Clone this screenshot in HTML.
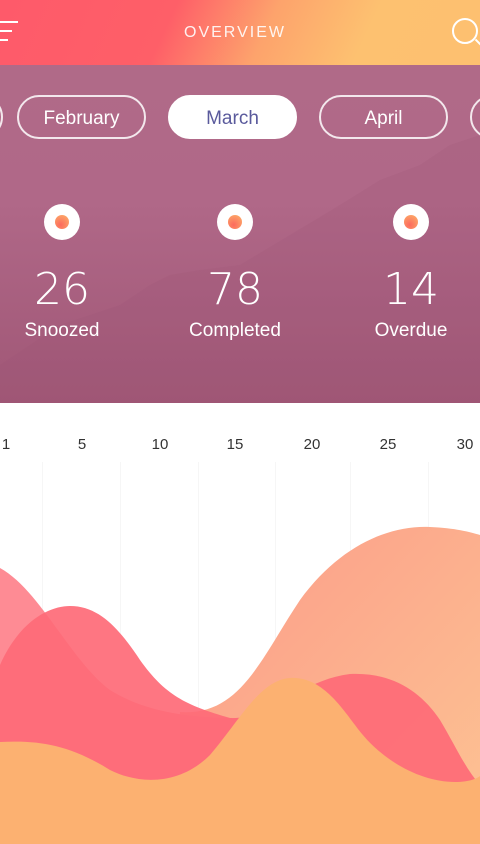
<!DOCTYPE html>
<html><head><meta charset="utf-8"><style>
*{margin:0;padding:0;box-sizing:border-box}
body{width:480px;height:844px;overflow:hidden;background:#fff;font-family:"Liberation Sans",sans-serif;position:relative}
.hdr{position:absolute;left:0;top:0;width:480px;height:65px;background:linear-gradient(115deg,#fe5a6a 0%,#fe5f68 35%,#fda36c 55%,#fdc170 75%,#fdc070 100%)}
.title{position:absolute;top:24px;left:0;width:470px;text-align:center;color:#fff;font-size:16px;letter-spacing:2px;opacity:.9}
.panel{position:absolute;left:0;top:65px;width:480px;height:338px;background:linear-gradient(180deg,#b06a88 0%,#b06888 40%,#a05776 100%);overflow:hidden}
.pill{position:absolute;top:30px;height:44px;width:129px;border:2px solid rgba(255,255,255,.85);border-radius:22px;color:#fff;font-size:19px;text-align:center;line-height:44px}
.pill.on{background:#fff;color:#5a5a9c;border-color:#fff}
.dot{position:absolute;width:36px;height:36px;border-radius:50%;background:#fff;top:139px}
.dot::after{content:"";position:absolute;left:11px;top:11px;width:14px;height:14px;border-radius:50%;background:radial-gradient(circle at 40% 70%,#fc6a5e,#fdb36a)}
.num{position:absolute;top:199px;font-family:"DejaVu Sans","Liberation Sans",sans-serif;font-size:44px;font-weight:200;width:160px;text-align:center;color:#fff}
.lbl{position:absolute;top:255px;font-size:19px;width:160px;text-align:center;color:#fff}
.ax{position:absolute;top:436px;font-size:15px;color:#333;width:30px;text-align:center}
.grid{position:absolute;top:462px;width:1px;height:250px;background:#f6f6f6}
</style></head><body>
<div class="hdr">
<div style="position:absolute;left:0;top:21px;width:18px;height:2px;background:#fff"></div>
<div style="position:absolute;left:0;top:30px;width:12px;height:2px;background:#fff"></div>
<div style="position:absolute;left:0;top:39px;width:8px;height:2px;background:#fff"></div>
<div class="title">OVERVIEW</div>
<div style="position:absolute;left:452px;top:18px;width:26px;height:26px;border:2px solid #fff;border-radius:50%"></div>
<div style="position:absolute;left:474px;top:42px;width:10px;height:2px;background:#fff;transform:rotate(45deg)"></div>
</div>
<div class="panel">
<svg width="480" height="338" style="position:absolute;left:0;top:0">
<path d="M0,300 L60,260 120,240 150,220 170,210 200,205 240,200 290,170 340,140 380,115 420,100 450,80 480,70 L480,338 L0,338Z" fill="#9c5577" opacity=".18"/>
</svg>
<div class="pill" style="left:-126px"></div>
<div class="pill" style="left:17px">February</div>
<div class="pill on" style="left:168px">March</div>
<div class="pill" style="left:319px">April</div>
<div class="pill" style="left:470px"></div>
<div class="dot" style="left:44px"></div>
<div class="dot" style="left:217px"></div>
<div class="dot" style="left:393px"></div>
<div class="num" style="left:-18px">26</div>
<div class="num" style="left:155px">78</div>
<div class="num" style="left:331px">14</div>
<div class="lbl" style="left:-18px">Snoozed</div>
<div class="lbl" style="left:155px">Completed</div>
<div class="lbl" style="left:331px">Overdue</div>
</div>
<div class="grid" style="left:42px"></div><div class="grid" style="left:120px"></div><div class="grid" style="left:198px"></div><div class="grid" style="left:275px"></div><div class="grid" style="left:350px"></div><div class="grid" style="left:428px"></div>
<div class="ax" style="left:-9px">1</div><div class="ax" style="left:67px">5</div><div class="ax" style="left:145px">10</div><div class="ax" style="left:220px">15</div><div class="ax" style="left:297px">20</div><div class="ax" style="left:373px">25</div><div class="ax" style="left:450px">30</div>
<svg width="480" height="844" style="position:absolute;left:0;top:0">
<defs><linearGradient id="s" x1="0" y1="0" x2="1" y2="1"><stop offset="0" stop-color="#fb9a88"/><stop offset="1" stop-color="#fdc393"/></linearGradient></defs>
<path d="M180,712 C240,716 260,660 300,600 C340,545 390,525 430,527 C455,528 470,532 480,535 L480,844 L180,844Z" fill="url(#s)"/>
<path d="M0,568 C40,590 70,660 110,690 C150,715 200,718 240,718 L240,844 L0,844Z" fill="#fe7e88" opacity=".9"/>
<path d="M0,665 C20,620 50,606 70,606 C100,606 120,630 140,660 C165,695 185,705 230,718 C270,720 300,680 350,674 C390,672 420,690 440,720 C455,745 465,768 480,785 L480,844 L0,844Z" fill="#fe6a77" opacity=".92"/>
<path d="M0,742 C40,740 70,745 110,770 C140,785 180,785 210,755 C240,720 260,680 290,678 C320,676 340,705 355,725 C380,760 420,782 455,782 C470,782 478,778 480,776 L480,844 L0,844Z" fill="#fcb171"/>
</svg>
</body></html>
